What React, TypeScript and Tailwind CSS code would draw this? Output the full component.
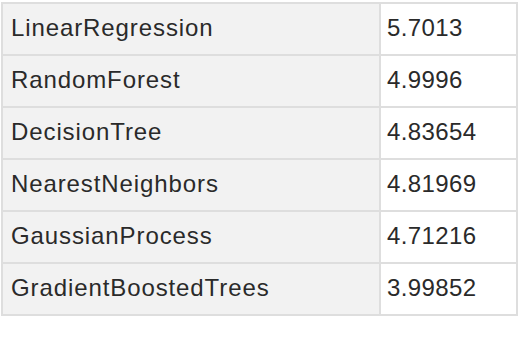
const rows: [string, string][] = [
  ["LinearRegression", "5.7013"],
  ["RandomForest", "4.9996"],
  ["DecisionTree", "4.83654"],
  ["NearestNeighbors", "4.81969"],
  ["GaussianProcess", "4.71216"],
  ["GradientBoostedTrees", "3.99852"],
];

export default function App() {
  return (
    <div className="w-[520px] h-[348px] bg-white pl-[1px] pt-[2px]" style={{ fontFamily: '"Liberation Sans", Arial, sans-serif' }}>
      <table className="border-collapse text-[24px] leading-[28px] text-[#2a2a2a]">
        <tbody>
          {rows.map(([name, val]) => (
            <tr key={name} className="h-[52px]">
              <td className="border-2 border-[#dedede] bg-[#f2f2f2] w-[378px] pl-[8px] pb-[3px] align-middle tracking-[0.9px]">{name}</td>
              <td className="border-2 border-[#dedede] bg-white w-[137px] pl-[6px] pb-[3px] align-middle tracking-[0.4px]">{val}</td>
            </tr>
          ))}
        </tbody>
      </table>
    </div>
  );
}
